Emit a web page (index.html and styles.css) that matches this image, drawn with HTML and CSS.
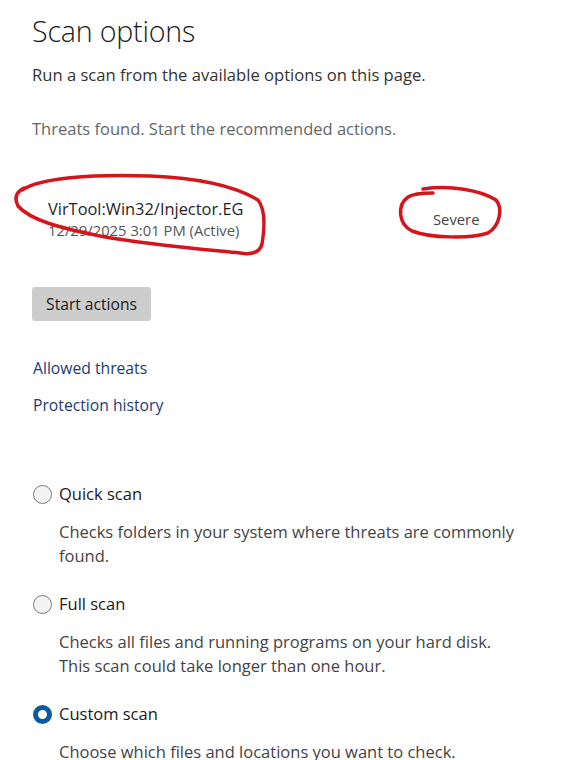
FILE: index.html
```html
<!DOCTYPE html>
<html lang="en">
<head>
<meta charset="utf-8">
<title>Scan options</title>
<link rel="stylesheet" href="styles.css">
</head>
<body>
<main class="page">
  <h1 class="title">Scan options</h1>
  <p class="subtitle">Run a scan from the available options on this page.</p>
  <p class="status">Threats found. Start the recommended actions.</p>

  <div class="threat">
    <div class="threat-info">
      <div class="threat-name">VirTool:Win32/Injector.EG</div>
      <div class="threat-date">12/29/2025 3:01 PM (Active)</div>
    </div>
    <div class="threat-level">Severe</div>
  </div>

  <button class="btn">Start actions</button>

  <nav class="links">
    <a class="link" href="#">Allowed threats</a>
    <a class="link" href="#">Protection history</a>
  </nav>

  <div class="options">
    <div class="option">
      <div class="radio-row"><span class="radio"></span><span class="radio-label">Quick scan</span></div>
      <p class="option-desc">Checks folders in your system where threats are commonly found.</p>
    </div>
    <div class="option">
      <div class="radio-row"><span class="radio"></span><span class="radio-label">Full scan</span></div>
      <p class="option-desc">Checks all files and running programs on your hard disk.<br>This scan could take longer than one hour.</p>
    </div>
    <div class="option">
      <div class="radio-row"><span class="radio radio-on"></span><span class="radio-label">Custom scan</span></div>
      <p class="option-desc">Choose which files and locations you want to check.</p>
    </div>
  </div>

  <svg class="ink" width="571" height="760" viewBox="0 0 571 760" aria-hidden="true">
    <path d="M22 190 C40 178 90 174 150 176 C200 178 235 186 258 200 C266 210 264 232 262 244 C260 252 252 255 240 253 C200 249 150 245 100 236 C60 228 30 220 18 206 C14 198 16 192 24 188" />
    <path d="M423 189 C450 185 480 190 496 200 C503 208 500 226 488 233 C470 239 430 238 412 231 C398 224 397 205 408 197 C414 193 425 193 433 193" />
  </svg>
</main>
</body>
</html>
```

FILE: styles.css
```css
* { box-sizing: border-box; }

html, body {
  margin: 0;
  padding: 0;
  background: #ffffff;
}

body {
  font-family: "Segoe UI", "Open Sans", "Noto Sans", "Liberation Sans", sans-serif;
  color: #1f1f1f;
  width: 571px;
  height: 760px;
  overflow: hidden;
}

.page {
  position: relative;
  padding: 11px 0 0 32px;
}

.title {
  margin: 0;
  font-size: 28.6px;
  font-weight: 300;
  line-height: 40px;
  color: #1a1a1a;
  letter-spacing: -0.2px;
}

.subtitle {
  margin: 12px 0 0;
  font-size: 16.6px;
  line-height: 24px;
  color: #333;
}

.status {
  margin: 30px 0 0;
  font-size: 16.5px;
  line-height: 24px;
  color: #666;
}

.threat {
  margin-top: 57px;
  padding-left: 16px;
  display: grid;
  grid-template-columns: 385px auto;
  align-items: center;
}

.threat-name {
  font-size: 16.4px;
  line-height: 22px;
  color: #1f1f1f;
}

.threat-date {
  font-size: 14.8px;
  line-height: 20px;
  color: #555;
}

.threat-level {
  font-size: 14.8px;
  color: #444;
}

.btn {
  display: block;
  margin-top: 47px;
  height: 34px;
  width: 119px;
  padding: 0;
  border: none;
  border-radius: 3px;
  background: #cdcdcd;
  font-family: inherit;
  font-size: 15.6px;
  color: #1a1a1a;
}

.links {
  margin-top: 35px;
  display: flex;
  flex-direction: column;
  gap: 13px;
}

.link {
  font-size: 15.7px;
  line-height: 24px;
  color: #1b3c73;
  text-decoration: none;
  padding-left: 1px;
}

.options {
  margin-top: 65px;
  display: flex;
  flex-direction: column;
  gap: 24px;
}

.radio-row {
  display: flex;
  align-items: center;
  gap: 7px;
  height: 24px;
}

.radio {
  width: 19px;
  height: 19px;
  margin-left: 1px;
  border-radius: 50%;
  border: 1px solid #7a7a7a;
  background: #f4f4f4;
  flex: none;
}

.radio-on {
  border: 5px solid #0b5aa2;
  background: #ffffff;
}

.radio-label {
  font-size: 16.5px;
  line-height: 24px;
  color: #1a1a1a;
}

.option-desc {
  margin: 14px 0 0 27px;
  max-width: 480px;
  font-size: 16.5px;
  line-height: 24px;
  color: #444;
}

.ink {
  position: absolute;
  left: 0;
  top: 0;
  pointer-events: none;
}

.ink path {
  fill: none;
  stroke: #d5151c;
  stroke-width: 3.5;
  stroke-linecap: round;
  stroke-linejoin: round;
}
```
